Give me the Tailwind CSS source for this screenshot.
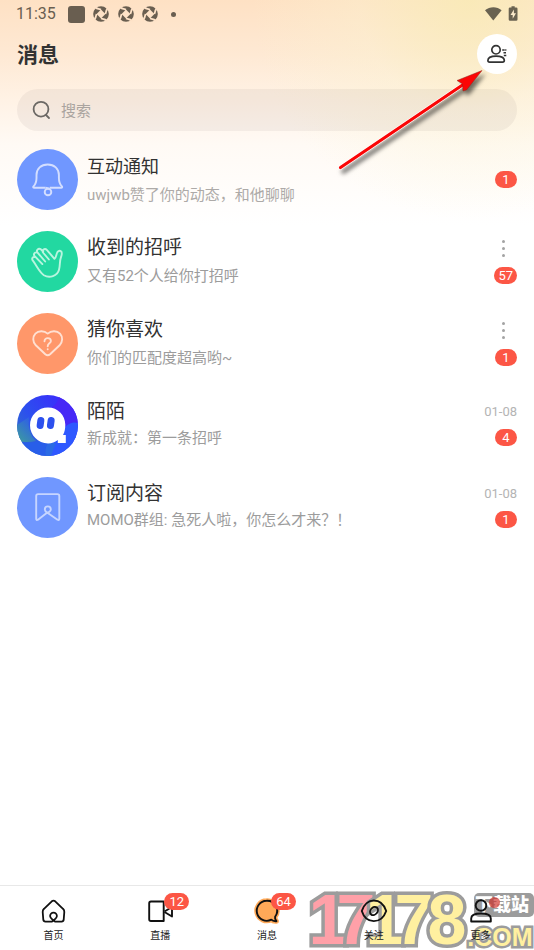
<!DOCTYPE html>
<html lang="zh-CN">
<head>
<meta charset="utf-8">
<meta name="viewport" content="width=device-width, initial-scale=1">
<title>消息</title>
<script src="https://cdn.jsdelivr.net/npm/@tailwindcss/browser@4"></script>
</head>
<body class="bg-white font-[Roboto,'Noto_Sans_CJK_SC',sans-serif] text-[#323232]">
<div class="relative flex min-h-screen flex-col overflow-hidden bg-[radial-gradient(ellipse_220px_220px_at_88%_0px,rgba(248,236,180,0.75),rgba(250,243,205,0.35)_50%,rgba(255,255,255,0)),linear-gradient(to_bottom,#fee1c4_0px,#fee9d4_55px,#fff2e5_100px,#fffaf5_145px,#ffffff_225px)]">

  <!-- Status bar -->
  <div class="flex h-7 items-center pr-[14px] pl-4 text-[#695e50]">
    <span class="text-base leading-7">11:35</span>
    <span class="ml-3 size-[17px] rounded-[3px] bg-[#695e50]"></span>
    <svg class="ml-2 h-4 w-[66px]" viewBox="0 0 66 16">
      <defs>
        <g id="aperture">
          <circle cx="8" cy="8" r="7.800" fill="currentColor"/>
          <path d="M8 3.600l4.400 4.400L8 12.400 3.600 8z" fill="#fee2c7"/>
          <path d="M8 3.600L4 2.400M12.400 8L13.600 4M8 12.400l4 1.200M3.600 8L2.400 12" stroke="#fee2c7" stroke-width="1.800"/>
          <path d="M4.500 2.600L1 1M13.400 4.500L15 1M11.500 13.400L15 15M2.600 11.500L1 15" stroke="#fee2c7" stroke-width="1.800"/>
        </g>
      </defs>
      <use href="#aperture"/><use href="#aperture" x="25"/><use href="#aperture" x="49"/>
    </svg>
    <span class="ml-3 size-[5px] rounded-full bg-[#695e50]"></span>
    <svg class="ml-auto h-4 w-9" viewBox="0 0 36 16" fill="#696251">
      <path d="M1 4.200C5.800 .2 13 .2 17.600 4.200L9.300 14.500Z"/>
      <path d="M27.500 .2h3.200v1.300h1.500q1.300 0 1.300 1.300v10.700q0 1.300-1.300 1.300h-6.200q-1.300 0-1.300-1.300V2.800q0-1.300 1.300-1.300h1.500z"/>
      <path d="M29.900 3.600l-3.400 5.300h2.200v3.800l3.300-5.400h-2.100z" fill="#fbeaca"/>
    </svg>
  </div>

  <!-- Header -->
  <header class="flex items-center justify-between px-[17px] pt-[6px]">
    <h1 class="pt-[2px] text-[21px] leading-[38px] font-bold">消息</h1>
    <button type="button" aria-label="联系人" class="flex size-10 items-center justify-center rounded-full bg-white">
      <svg class="size-6" viewBox="0 0 24 24" fill="none" stroke="#323333" stroke-width="1.700" stroke-linejoin="round">
        <circle cx="11" cy="7.800" r="4.200"/>
        <path d="M4.600 20.200q-1.700 0-1.700-1.600c0-3.700 3.800-4.500 8.200-4.500s8.200.8 8.200 4.500q0 1.600-1.700 1.600z"/>
        <path d="M17.200 8h4.200M18.500 10.800h2.900M18.800 13.600h2.600" stroke-width="1.500" stroke-dasharray="2.500 .5"/>
      </svg>
    </button>
  </header>

  <!-- Search -->
  <div class="px-[17px] pt-[15px]">
    <label class="flex h-[42px] items-center rounded-full bg-[#5f5a55]/7 pl-[14px]">
      <svg class="size-5" viewBox="0 0 20 20" fill="none" stroke="#6b6864" stroke-width="1.800" stroke-linecap="round">
        <circle cx="10" cy="9.200" r="7.400"/><path d="M15 15l3 3"/>
      </svg>
      <input type="search" aria-label="搜索" placeholder="搜索" class="ml-[10px] min-w-0 flex-1 bg-transparent pt-[2px] text-[15px] leading-6 outline-none placeholder:text-[#aaa49f]">
    </label>
  </div>

  <!-- Conversations -->
  <ul class="flex flex-col gap-[21px] px-[17px] pt-[18px] pb-6">
    <li class="flex h-[61px] gap-[9px]">
      <svg class="size-[61px] shrink-0" viewBox="0 0 61 61" fill="none" stroke="#d3deff" stroke-width="1.900" stroke-linejoin="round">
        <circle cx="30.500" cy="30.500" r="30.500" fill="#7097ff" stroke="none"/>
        <path d="M28.500 38.700H16.800q-1-.4-.3-1.300c2.600-2.600 3-4.600 3-8.400v-3c0-6.300 4.600-10.500 11.200-10.500s11.200 4.200 11.200 10.500v3c0 3.800.4 5.800 3 8.400q.7.900-.3 1.300H32.800"/>
        <path d="M28.500 38.700l4 1"/><circle cx="31" cy="43" r="3.300"/>
      </svg>
      <div class="min-w-0 flex-1 pt-1">
        <h2 class="truncate text-lg leading-7">互动通知</h2>
        <p class="truncate text-[15px] leading-7 text-[#adaaa8]">uwjwb赞了你的动态，和他聊聊</p>
      </div>
      <div class="flex flex-col items-end justify-center">
        <span class="h-[17px] min-w-[22px] rounded-full bg-[#fc5645] px-1 text-center text-[13px] leading-[17px] text-white">1</span>
      </div>
    </li>
    <li class="flex h-[61px] gap-[9px]">
      <svg class="size-[61px] shrink-0" viewBox="0 0 61 61" fill="none" stroke="#b9f5df" stroke-width="1.900" stroke-linecap="round" stroke-linejoin="round">
        <circle cx="30.500" cy="30.500" r="30.500" fill="#22d8a1" stroke="none"/>
        <path d="M37.500 27.800L30 19.200q-1.800-2-3.700-.4-1.400 1.300.1 3.200l5.500 6.500M26.200 20.500l-2.100-2q-2-1.500-3.600.1-1.300 1.500.1 3.100l7.600 8.800M20.500 21.800q-1.700-1-3 .3-1.200 1.400.2 3l7.700 8M17.500 26q-1.600-.2-2.200 1.200-.4 1.200.6 2.500c4 5.300 6.400 11.500 11 14.500 5.600 3.300 13.500.8 15.100-5.400 1.300-4.600.4-8.500 2-12.600.8-2.400 1.500-4.300.2-5.700q-1.900-1.500-3.700.5c-1.400 1.900-1.200 5.900-3 6.800"/>
      </svg>
      <div class="min-w-0 flex-1 pt-[3px]">
        <h2 class="truncate text-[19px] leading-7">收到的招呼</h2>
        <p class="truncate text-[15px] leading-7 text-[#9c9c9c]">又有52个人给你打招呼</p>
      </div>
      <div class="flex flex-col items-end pt-[3px]">
        <button type="button" aria-label="更多操作" class="mr-3 flex h-7 flex-col items-center justify-center gap-1">
          <span class="size-[3px] rounded-full bg-[#a3a3a3]"></span><span class="size-[3px] rounded-full bg-[#a3a3a3]"></span><span class="size-[3px] rounded-full bg-[#a3a3a3]"></span>
        </button>
        <span class="mt-[5px] h-[17px] min-w-[22px] rounded-full bg-[#fc5645] px-1 text-center text-[13px] leading-[17px] text-white">57</span>
      </div>
    </li>
    <li class="flex h-[61px] gap-[9px]">
      <svg class="size-[61px] shrink-0" viewBox="0 0 61 61" fill="none" stroke="#ffe0d2" stroke-width="1.900" stroke-linecap="round" stroke-linejoin="round">
        <circle cx="30.500" cy="30.500" r="30.500" fill="#ff976a" stroke="none"/>
        <path d="M30.700 20.600c-3.600-3.200-9.300-3.100-12.300.1-3 3.300-2.800 8.300.4 11.600l9.500 9q2.400 2 4.800 0l9.500-9c3.200-3.300 3.400-8.300.4-11.600-3-3.200-8.700-3.300-12.300-.1z"/>
        <path d="M27.500 28.200c.1-4.300 6.400-3.700 6.400-.2 0 2.400-3.200 2.300-3.200 5.200M30.700 36.100v.2" stroke-width="1.900"/>
      </svg>
      <div class="min-w-0 flex-1 pt-[3px]">
        <h2 class="truncate text-[19px] leading-7">猜你喜欢</h2>
        <p class="truncate text-[15px] leading-7 text-[#9c9c9c]">你们的匹配度超高哟~</p>
      </div>
      <div class="flex flex-col items-end pt-[3px]">
        <button type="button" aria-label="更多操作" class="mr-3 flex h-7 flex-col items-center justify-center gap-1">
          <span class="size-[3px] rounded-full bg-[#a3a3a3]"></span><span class="size-[3px] rounded-full bg-[#a3a3a3]"></span><span class="size-[3px] rounded-full bg-[#a3a3a3]"></span>
        </button>
        <span class="mt-[5px] h-[17px] min-w-[22px] rounded-full bg-[#fc5645] px-1 text-center text-[13px] leading-[17px] text-white">1</span>
      </div>
    </li>
    <li class="flex h-[61px] gap-[9px]">
      <svg class="size-[61px] shrink-0" viewBox="0 0 61 61">
        <defs>
          <linearGradient id="momo" x1="0" y1=".8" x2="1" y2=".1"><stop offset="0" stop-color="#316fc8"/><stop offset=".35" stop-color="#2c50ee"/><stop offset="1" stop-color="#3f22ff"/></linearGradient>
          <linearGradient id="teal" x1="0" y1="1" x2=".8" y2="0"><stop offset="0" stop-color="#3d9f9a"/><stop offset="1" stop-color="#2d57f0"/></linearGradient>
          <clipPath id="disc"><circle cx="30.500" cy="30.500" r="30.500"/></clipPath>
        </defs>
        <g clip-path="url(#disc)">
          <path fill="url(#momo)" d="M0 0h61v61H0z"/>
          <path fill="#4728f6" d="M34 13Q42 8 42 0h19v28q-7-2-13 4z"/>
          <path fill="#2e58ff" d="M48 32q6-6 13-4v33H30l3-13z"/>
          <path fill="url(#teal)" d="M0 30l12-8q-2 16 7 24-9 2-19 0z"/>
          <path fill="#285ee9" d="M0 46q12 3 22 0l9 2q-4 6-2 13H0z"/>
          <path fill="#2b6be4" d="M31 48h8q-3 7-5 13h-5q-2-7 2-13z"/>
        </g>
        <path fill="#fff" d="M31 12.500c9.800 0 17.300 7.600 17.300 17.300 0 4-.6 7.300-2.300 10.200h2.800v8h-8v-3c-3 2.300-5.800 3.500-9.800 3.500-9.800 0-18-8.200-18-18.200s8.200-17.800 18-17.800z"/>
        <rect x="20" y="22" width="7" height="12" rx="3.500" fill="#2c50ee" transform="rotate(8 23.200 28)"/>
        <rect x="30.300" y="22" width="7" height="12" rx="3.500" fill="#2c50ee" transform="rotate(8 33.700 28)"/>
      </svg>
      <div class="min-w-0 flex-1 pt-[3px]">
        <h2 class="truncate text-[19px] leading-7">陌陌</h2>
        <p class="truncate text-[15px] leading-6 text-[#9c9c9c]">新成就：第一条招呼</p>
      </div>
      <div class="flex flex-col items-end pt-[3px]">
        <time class="text-[13px] leading-7 text-[#b4b4b4]">01-08</time>
        <span class="mt-[3px] h-[17px] min-w-[22px] rounded-full bg-[#fc5645] px-1 text-center text-[13px] leading-[17px] text-white">4</span>
      </div>
    </li>
    <li class="flex h-[61px] gap-[9px]">
      <svg class="size-[61px] shrink-0" viewBox="0 0 61 61" fill="none" stroke="#c6d5ff" stroke-width="1.900" stroke-linecap="round" stroke-linejoin="round">
        <circle cx="30.500" cy="30.500" r="30.500" fill="#7097ff" stroke="none"/>
        <path d="M29 36.500l-8 6.200q-1.800 1-1.800-1V19q0-1.900 1.900-1.900h19.300q1.900 0 1.900 1.900v22.700q0 2-1.800 1l-9-6.200c-2-1.300-3.700-2-3.700-4.100a3 3 0 0 1 6 0c0 2.100-2 2.900-4.800 4.100"/>
      </svg>
      <div class="min-w-0 flex-1 pt-[3px]">
        <h2 class="truncate text-[19px] leading-7">订阅内容</h2>
        <p class="truncate text-[15px] leading-6 text-[#9c9c9c]">MOMO群组: 急死人啦，你怎么才来？！</p>
      </div>
      <div class="flex flex-col items-end pt-[3px]">
        <time class="text-[13px] leading-7 text-[#b4b4b4]">01-08</time>
        <span class="mt-[3px] h-[17px] min-w-[22px] rounded-full bg-[#fc5645] px-1 text-center text-[13px] leading-[17px] text-white">1</span>
      </div>
    </li>
  </ul>

  <!-- Site watermark -->
  <svg class="pointer-events-none absolute right-0 bottom-0 h-[64px] w-[226px]" viewBox="0 0 226 64" font-family="'Liberation Sans',sans-serif" font-weight="700" text-anchor="middle" stroke="#9c9c9c" stroke-width="7" stroke-linejoin="miter" paint-order="stroke">
    <g font-size="70">
      <g fill="#ffa0a8"><text x="20" y="58">1</text><text x="48" y="58">7</text></g>
      <g fill="#fff0a0"><text x="77" y="58">1</text><text x="106" y="58">7</text><text x="139" y="58">8</text></g>
    </g>
    <text x="192" y="60" font-size="25" stroke-width="5" fill="#fff0a0">.COM</text>
    <rect x="166" y="7" width="60" height="24" rx="5" fill="#9c9c9c" stroke="none"/>
    <text x="194" y="25" font-size="18" font-weight="900" font-family="'Noto Sans CJK SC',sans-serif" fill="#fff" stroke="none">下载站</text>
  </svg>

  <!-- Bottom tabs -->
  <nav class="relative z-10 mt-auto grid grid-cols-5 border-t border-[#e8e8e8] pt-[11px] pb-1 text-[10px] leading-5 text-[#222]">
    <a href="#" class="flex flex-col items-center gap-[1px]">
      <svg class="size-7" viewBox="0 0 28 28" fill="none" stroke="#111" stroke-width="1.800" stroke-linejoin="round">
        <path d="M13 24.600c2.700-1.900 4.900-3.400 4.900-5.600a3.400 3.400 0 0 0-6.800 0c0 2.200 2.200 3.700 4.900 5.600h6.600q1.900 0 2.100-1.900l.6-7.700q.1-2-1.300-3.200l-7.800-7.500q-1.700-1.300-3.400 0l-7.800 7.500q-1.400 1.200-1.300 3.200l.6 7.700q.2 1.900 2.100 1.900z"/>
      </svg>
      <span>首页</span>
    </a>
    <a href="#" class="relative flex flex-col items-center gap-[1px]">
      <svg class="size-7" viewBox="0 0 28 28" fill="none" stroke="#111" stroke-width="1.900" stroke-linejoin="round">
        <path d="M5 4.500h12.700v19.500H5q-1.800 0-1.800-1.800V6.300Q3.200 4.500 5 4.500z"/><path d="M18.500 14.500l7.500-4.500v9.500l-7.500-4.500"/>
      </svg>
      <span>直播</span>
      <span class="absolute -top-1 left-1/2 ml-1 h-[17px] w-[25px] rounded-full bg-[#fc5645] text-center text-[13px] leading-[17px] text-white">12</span>
    </a>
    <a href="#" aria-current="page" class="relative flex flex-col items-center gap-[1px]">
      <svg class="size-7" viewBox="0 0 28 28" stroke-linejoin="round">
        <path d="M13.500 3.800a10 10 0 1 0 4.800 18.900q1.800 1.800 5.200 1.500-2-2.200-1.400-4.400A10 10 0 0 0 13.500 3.800z" fill="#ffa958" stroke="#ffa958" stroke-width="5"/>
        <path d="M13.500 3.800a10 10 0 1 0 4.800 18.900q1.800 1.800 5.200 1.500-2-2.200-1.400-4.400A10 10 0 0 0 13.500 3.800z" fill="#ffa958" stroke="#111" stroke-width="1.900"/>
      </svg>
      <span>消息</span>
      <span class="absolute -top-1 left-1/2 ml-1 h-[17px] w-[25px] rounded-full bg-[#fc5645] text-center text-[13px] leading-[17px] text-white">64</span>
    </a>
    <a href="#" class="flex flex-col items-center gap-[1px]">
      <svg class="size-7" viewBox="0 0 28 28" fill="none" stroke="#111" stroke-width="1.900" stroke-linejoin="round">
        <path d="M1.800 14C6 0 21.500 0 26.200 14 21.500 27.500 6 27.500 1.800 14z"/><ellipse cx="14" cy="14" rx="3.500" ry="4.500" transform="rotate(40 14 14)"/>
      </svg>
      <span>关注</span>
    </a>
    <a href="#" class="relative flex flex-col items-center gap-[1px]">
      <svg class="size-7" viewBox="0 0 28 28" fill="none" stroke="#111" stroke-width="1.900" stroke-linejoin="round">
        <circle cx="14" cy="8.500" r="5.300"/>
        <path d="M4.200 24.500v-3c0-3.500 2.800-5 9.800-5s9.800 1.500 9.800 5v3z"/>
      </svg>
      <span>更多</span>
      <span class="absolute top-0 left-1/2 ml-2 size-[11px] rounded-full bg-[#d02a22]/65"></span>
    </a>
  </nav>

  <!-- Pointer arrow -->
  <svg class="pointer-events-none absolute top-[64px] right-[44px] h-[112px] w-[154px] drop-shadow-[3px_4px_2px_rgba(0,0,0,0.55)]" viewBox="0 0 154 112">
    <path d="M4.500 103.500L128 20" stroke="#fff" stroke-width="4.500" stroke-linecap="round"/>
    <path d="M4.500 103.500L128 20" stroke="#fb0505" stroke-width="3.200" stroke-linecap="round"/>
    <path d="M146 6.500L121 16.500l5.500 3.500 .5 7 3.500-1z" fill="#fb0505" stroke="#8b2a1f" stroke-width=".5"/>
  </svg>
</div>
</body>
</html>
